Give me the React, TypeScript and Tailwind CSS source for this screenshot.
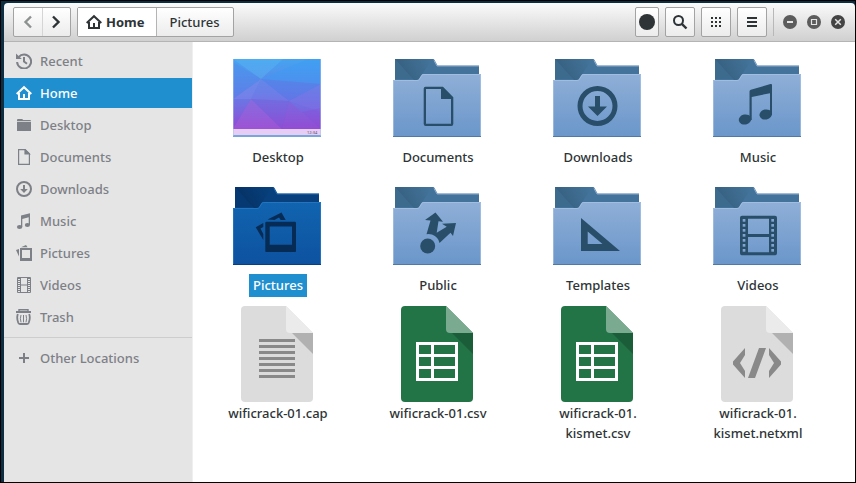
import React, { useState } from 'react';

type IconProps = { className?: string };

const HomeIcon: React.FC<IconProps> = ({ className }) => (
  <svg viewBox="0 0 16 16" className={className} fill="none" stroke="currentColor" strokeWidth="2">
    <path d="M0.7 9 8 2.2 15.3 9" />
    <path d="M3 8v6h10V8" />
    <path d="M8 14V9" />
  </svg>
);

const RecentIcon: React.FC<IconProps> = ({ className }) => (
  <svg viewBox="0 0 16 16" className={className} fill="none" stroke="currentColor" strokeWidth="2">
    <path d="M2.6 4.2A7 7 0 1 1 1.1 9" />
    <path d="M0 .5V6h5.8z" fill="currentColor" stroke="none" />
    <path d="M8 4v4.5l3 2.3" />
  </svg>
);

const FolderIcon: React.FC<IconProps> = ({ className }) => (
  <svg viewBox="0 0 16 16" className={className} fill="currentColor">
    <path d="M1 4.2V3q0-1 1-1h4.2l1 1H14q1 0 1 1v.2zM1 5h14v9H1z" />
  </svg>
);

const DocumentIcon: React.FC<IconProps> = ({ className }) => (
  <svg viewBox="0 0 16 16" className={className} fill="none" stroke="currentColor" strokeWidth="1.2">
    <path d="M2.6.6h6.6l4.2 4.2v10.6H2.6z" />
    <path d="M9 .6V5h4.4z" fill="currentColor" />
  </svg>
);

const DownloadIcon: React.FC<IconProps> = ({ className }) => (
  <svg viewBox="0 0 16 16" className={className} fill="none" stroke="currentColor" strokeWidth="2">
    <circle cx="8" cy="8" r="7" />
    <path d="M8 4v5" />
    <path d="M4.2 8h7.6L8 12z" fill="currentColor" stroke="none" />
  </svg>
);

const MusicIcon: React.FC<IconProps> = ({ className }) => (
  <svg viewBox="0 0 16 16" className={className} fill="currentColor">
    <path d="M5 2.6 14 .2V12h-1.3V4.2L6.3 6v8H5z" />
    <ellipse cx="3.6" cy="13.9" rx="2.7" ry="2" />
    <ellipse cx="11.4" cy="12" rx="2.6" ry="2" />
  </svg>
);

const PicturesIcon: React.FC<IconProps> = ({ className }) => (
  <svg viewBox="0 0 16 16" className={className} fill="currentColor">
    <path d="M4 3v13h12V3zm2 2h8v8H6z" fillRule="evenodd" />
    <path d="M5 2.2 10 0l1.6 2.2zM3 4v7.5L0 5z" />
  </svg>
);

const VideosIcon: React.FC<IconProps> = ({ className }) => (
  <svg viewBox="0 0 16 16" className={className} fill="none" stroke="currentColor">
    <path d="M1.5.5h13v15h-13zM4.5.5v15M11.5.5v15M4.5 8h7" />
    <path d="M3 1v14M13 1v14" strokeDasharray="1 1" strokeWidth="2" />
  </svg>
);

const TrashIcon: React.FC<IconProps> = ({ className }) => (
  <svg viewBox="0 0 16 16" className={className} fill="none" stroke="currentColor">
    <path d="M0 3h15" strokeWidth="2" />
    <path d="M3 2.5V.8h9v1.7" strokeWidth="1.4" />
    <path d="M1.8 5q-1.4 4.6.5 8.8.6 1.2 1.7 1.2h7q1.1 0 1.7-1.2 1.9-4.200.5-8.800" strokeWidth="1.8" />
    <path d="M5 6q-1.200 3.600 0 7.300M7.500 6v7.300M10 6q1.200 3.600 0 7.300" strokeWidth="1" />
  </svg>
);

const PlusIcon: React.FC<IconProps> = ({ className }) => (
  <svg viewBox="0 0 16 16" className={className} fill="none" stroke="currentColor" strokeWidth="2">
    <path d="M8 3v10M3 8h10" />
  </svg>
);

const ChevronIcon: React.FC<IconProps> = ({ className }) => (
  <svg viewBox="0 0 16 16" className={className} fill="none" stroke="currentColor" strokeWidth="2.4">
    <path d="m5 2.5 5.500 5.500L5 13.500" />
  </svg>
);

const Folder: React.FC<{ id: string; selected?: boolean; children: React.ReactNode }> = ({ id, selected, children }) => {
  const c = selected
    ? { top: '#1164b0', bottom: '#0d52a0', back: '#07407c', dark: '#052c5b', edge: '#2a7cc4', base: '#083f83', glyph: '#062c56' }
    : { top: '#8fafd7', bottom: '#6a96ca', back: '#43739a', dark: '#315875', edge: '#a9c3e3', base: '#5079a6', glyph: '#294e69' };
  return (
    <svg viewBox="0 0 96 96" className="size-24">
      <defs>
        <linearGradient id={`front-${id}`} x1="0" y1="0" x2="0" y2="1">
          <stop offset="0" stopColor={c.top} />
          <stop offset="1" stopColor={c.bottom} />
        </linearGradient>
        <linearGradient id={`back-${id}`} x1="0" y1="0.6" x2="1" y2="0.3">
          <stop offset="0" stopColor={c.dark} />
          <stop offset="1" stopColor={c.back} />
        </linearGradient>
      </defs>
      <path d="M5 9h38q1 0 1.500 1l3 5.500H89V32H5z" fill={c.back} />
      <path d="M5 9v20h19z" fill={c.dark} opacity=".3" />
      <path d="M5 9 24 30h5l4-7 9-14z" fill={`url(#back-${id})`} opacity=".8" />
      <path d="M44 10.500 47 16h42" fill="none" stroke={c.edge} opacity=".7" />
      <path d="M3 30h24q1.500 0 2-1l2.500-4q.5-1 1.500-1H91v63H3z" fill={`url(#front-${id})`} />
      <path d="M3.500 87V30.500H27q1.700 0 2.300-1l2.500-4q.5-1 1.500-1h57.200V87" fill="none" stroke={c.edge} opacity=".7" />
      <path d="M3 86.500h88" stroke={c.base} />
      <g fill={c.glyph}>{children}</g>
    </svg>
  );
};

const Sheet: React.FC<{ color: string; fold: string; shade: string; children: React.ReactNode }> = ({ color, fold, shade, children }) => (
  <svg viewBox="0 0 96 96" className="size-24">
    <path d="M15 0h41l27 27v65q0 4-4 4H15q-4 0-4-4V4q0-4 4-4z" fill={color} />
    <path d="M62 27h21v21z" fill={shade} />
    <path d="M56 0l27 27H60q-4 0-4-4z" fill={fold} />
    {children}
  </svg>
);

const DesktopThumb = () => (
  <svg viewBox="0 0 96 96" className="size-24">
    <defs>
      <linearGradient id="wallpaper" x1="0" y1="0" x2="0" y2="1">
        <stop offset="0" stopColor="#45a4f0" />
        <stop offset=".4" stopColor="#5f82e8" />
        <stop offset=".65" stopColor="#7868e0" />
        <stop offset=".9" stopColor="#9448d2" />
      </linearGradient>
    </defs>
    <path d="M3 9h88v78H3z" fill="url(#wallpaper)" />
    <path d="M3 9h50L31 29z" fill="#5cb8f3" opacity=".4" />
    <path d="M3 12 31 29 3 49z" fill="#4f86ea" opacity=".35" />
    <path d="M31 29 78 9h13v25z" fill="#3a9cf4" opacity=".4" />
    <path d="M31 29 91 34 59 51z" fill="#5578e6" opacity=".4" />
    <path d="M31 29 21 49 3 49z" fill="#7f88ea" opacity=".5" />
    <path d="M31 29 59 51 21 49z" fill="#7e7ee8" opacity=".35" />
    <path d="M59 51 91 34v28z" fill="#7f74e6" opacity=".4" />
    <path d="M21 49 3 79h49z" fill="#a860d8" opacity=".45" />
    <path d="M21 49l38 2-7 28z" fill="#8058d8" opacity=".35" />
    <path d="M59 51 91 79H52z" fill="#9254d8" opacity=".4" />
    <path d="M91 58v21L72 62z" fill="#8a4cd6" opacity=".35" />
    <path d="M3 79h88v6H3z" fill="#e6cdf3" />
    <path d="M3 85h88v2H3z" fill="#78a6dc" />
    <path d="M3.500 9v77M90.500 9v77" stroke="#a8c4f0" opacity=".5" />
    <text x="77" y="84" fontSize="4" fill="#5c4a66" fontFamily="Noto Sans, sans-serif">12:34</text>
  </svg>
);

const TableGlyph = () => (
  <path
    fill="#fff"
    fillRule="evenodd"
    d="M26 36h42v39H26zM29 39v9h12v-9zM44 39v9h21v-9zM29 51v9h12v-9zM44 51v9h21v-9zM29 63v9h12v-9zM44 63v9h21v-9z"
  />
);

const CsvSheet = () => (
  <Sheet color="#227447" fold="#7aab90" shade="#1b5d38">
    <TableGlyph />
  </Sheet>
);

const PLACES = [
  { name: 'Recent', Icon: RecentIcon },
  { name: 'Home', Icon: HomeIcon },
  { name: 'Desktop', Icon: FolderIcon },
  { name: 'Documents', Icon: DocumentIcon },
  { name: 'Downloads', Icon: DownloadIcon },
  { name: 'Music', Icon: MusicIcon },
  { name: 'Pictures', Icon: PicturesIcon },
  { name: 'Videos', Icon: VideosIcon },
  { name: 'Trash', Icon: TrashIcon },
];

const FILM_HOLES = [0, 1, 2, 3, 4, 5, 6];

const renderIcon = (name: string, selected: boolean) => {
  switch (name) {
    case 'Desktop':
      return <DesktopThumb />;
    case 'Documents':
      return (
        <Folder id="documents" selected={selected}>
          <path fillRule="evenodd" d="M35.500 36.700H53l10.300 10.500V74q0 2-2 2H35.700q-2 0-2-2V38.500q0-1.800 1.800-1.800zM36 39v34.700h25V49H51V39z" />
        </Folder>
      );
    case 'Downloads':
      return (
        <Folder id="downloads" selected={selected}>
          <path fillRule="evenodd" d="M47.500 36a20 20 0 1 1 0 40 20 20 0 0 1 0-40zm0 5a15 15 0 1 0 0 30 15 15 0 0 0 0-30z" />
          <path d="M45 46h5v10.500h7L47.500 66 38 56.500h7z" />
        </Folder>
      );
    case 'Music':
      return (
        <Folder id="music" selected={selected}>
          <path d="M39.500 41.500q0-1.300 1.300-1.700L60.500 34q1.500-.4 1.500 1v30h-2V43.200L41.700 47v23h-2.200z" />
          <ellipse cx="35" cy="69.500" rx="6.300" ry="5" transform="rotate(-12 35 69.500)" />
          <ellipse cx="55.700" cy="64.500" rx="6.300" ry="5" transform="rotate(-12 55.700 64.500)" />
        </Folder>
      );
    case 'Pictures':
      return (
        <Folder id="pictures" selected={selected}>
          <path fillRule="evenodd" d="M36.500 43.700h28.300q1.200 0 1.200 1.200v28q0 1.200-1.200 1.200H36.500q-1.200 0-1.200-1.200v-28q0-1.200 1.200-1.200zM39.700 48.500v18.200H62V48.500z" />
          <path d="m37.500 41.500 14-7 4.200 7.500h-5l-1.700-2.500-4.500 2.500zM33.300 45v4l-2.800 1.500 2.800 5.500v6L25.700 49.300z" />
        </Folder>
      );
    case 'Public':
      return (
        <Folder id="public" selected={selected}>
          <circle cx="37.700" cy="68" r="7.500" />
          <path d="M45.500 34.500 53 43.700l-4.500-.5-1.800 11.500 10-6-4.700-3L66 45l-3 13-2.500-3.300L49.500 65q-1-6-7.500-8.500-3-.8-5.500-.3l4-13.700L35 42z" />
        </Folder>
      );
    case 'Templates':
      return (
        <Folder id="templates" selected={selected}>
          <path fillRule="evenodd" d="M31 40v33h39zm6.700 13.500L52.500 66H37.700z" />
        </Folder>
      );
    case 'Videos':
      return (
        <Folder id="videos" selected={selected}>
          <path fillRule="evenodd" d="M32 37.700h33q2 0 2 2v35.500q0 2-2 2H32q-2 0-2-2V39.700q0-2 2-2zM38 40.700V56h21V40.700zM38 59v15.200h21V59z" />
          {FILM_HOLES.map(i => (
            <g key={i} fill="#7fa4d1">
              <rect x="32.700" y={41 + i * 5} width="2.700" height="2.700" />
              <rect x="61.300" y={41 + i * 5} width="2.700" height="2.700" />
            </g>
          ))}
        </Folder>
      );
    case 'wificrack-01.cap':
      return (
        <Sheet color="#dcdcdc" fold="#ebebeb" shade="#b1b1b1">
          <path fill="#898989" d="M29 33h36v3H29zM29 39h36v3H29zM29 45h36v3H29zM29 51h36v3H29zM29 57h36v3H29zM29 63h36v3H29zM29 69h36v3H29z" />
        </Sheet>
      );
    case 'wificrack-01.kismet.netxml':
      return (
        <Sheet color="#dcdcdc" fold="#ebebeb" shade="#b1b1b1">
          <path fill="#898989" d="M35 42v7l-5 8 5 8v7L23 58.500v-3zM59 42v7l5 8-5 8v7l12-13.500v-3zM49 42h7L45 72h-7z" />
        </Sheet>
      );
    default:
      return <CsvSheet />;
  }
};

const ITEMS = [
  { name: 'Desktop', lines: ['Desktop'] },
  { name: 'Documents', lines: ['Documents'] },
  { name: 'Downloads', lines: ['Downloads'] },
  { name: 'Music', lines: ['Music'] },
  { name: 'Pictures', lines: ['Pictures'] },
  { name: 'Public', lines: ['Public'] },
  { name: 'Templates', lines: ['Templates'] },
  { name: 'Videos', lines: ['Videos'] },
  { name: 'wificrack-01.cap', lines: ['wificrack-01.cap'] },
  { name: 'wificrack-01.csv', lines: ['wificrack-01.csv'] },
  { name: 'wificrack-01.kismet.csv', lines: ['wificrack-01.', 'kismet.csv'] },
  { name: 'wificrack-01.kismet.netxml', lines: ['wificrack-01.', 'kismet.netxml'] },
];

const TOOL_BUTTON = 'flex h-[30px] items-center justify-center rounded-xs border border-[#a3a3a3] bg-linear-to-b from-white to-[#ececec]';

const HeaderBar = () => (
  <header className="flex items-start rounded-t-sm border-b border-[#b4b4b4] bg-linear-to-b from-[#fbfbfb] to-[#d0d0d0] pt-1 pr-2.5 pb-1 pl-[9px]">
    <div className="flex h-[30px] w-[58px] rounded-xs border border-[#a3a3a3] bg-linear-to-b from-white to-[#ececec]">
      <button type="button" aria-label="Back" className="flex flex-1 items-center justify-center border-r border-[#d5d5d5] text-[#8e9192]">
        <ChevronIcon className="size-4 rotate-180" />
      </button>
      <button type="button" aria-label="Forward" className="flex flex-1 items-center justify-center">
        <ChevronIcon className="size-4" />
      </button>
    </div>

    <nav className="ml-1.5 flex h-[30px] rounded-xs border border-[#a3a3a3] bg-linear-to-b from-white to-[#ececec]">
      <button type="button" className="flex items-center gap-1 border-r border-[#b4b4b4] bg-white pr-[11px] pl-2 font-bold">
        <HomeIcon className="size-4" />
        <span className="pt-0.5">Home</span>
      </button>
      <button type="button" className="px-[13px] pt-0.5 font-medium">Pictures</button>
    </nav>

    <div className="ml-auto flex items-center gap-1.5">
      <button type="button" aria-label="Record" className={`w-6 ${TOOL_BUTTON}`}>
        <span className="size-4 shrink-0 rounded-full bg-[#2e3436]" />
      </button>
      <button type="button" aria-label="Search" className={`w-[30px] ${TOOL_BUTTON}`}>
        <svg viewBox="0 0 16 16" className="size-4" fill="none" stroke="currentColor">
          <circle cx="6.500" cy="6.500" r="4.500" strokeWidth="2" />
          <path d="m9.800 9.800 4.700 4.700" strokeWidth="2.400" />
        </svg>
      </button>
      <button type="button" aria-label="Icon view" className={`w-[30px] ${TOOL_BUTTON}`}>
        <svg viewBox="0 0 16 16" className="size-4" fill="none" stroke="currentColor" strokeWidth="2" strokeDasharray="2 2">
          <path d="M3 4h10M3 8h10M3 12h10" />
        </svg>
      </button>
      <button type="button" aria-label="Menu" className={`w-[30px] ${TOOL_BUTTON}`}>
        <svg viewBox="0 0 16 16" className="size-4" fill="none" stroke="currentColor" strokeWidth="2">
          <path d="M3 4h10M3 8h10M3 12h10" />
        </svg>
      </button>
      <div className="h-7 w-px bg-[#b8b8b8]" />
      <div className="ml-[3px] flex gap-2.5">
        <button type="button" aria-label="Minimize">
          <svg viewBox="0 0 14 14" className="size-3.5" fill="none">
            <circle cx="7" cy="7" r="7" fill="#5c5c5c" />
            <path d="M4 7h6" stroke="#e4e4e4" strokeWidth="2" />
          </svg>
        </button>
        <button type="button" aria-label="Maximize">
          <svg viewBox="0 0 14 14" className="size-3.5" fill="none">
            <circle cx="7" cy="7" r="7" fill="#5c5c5c" />
            <path d="M4.500 4.500h5v5h-5z" stroke="#e4e4e4" strokeWidth="1.200" />
          </svg>
        </button>
        <button type="button" aria-label="Close">
          <svg viewBox="0 0 14 14" className="size-3.5" fill="none">
            <circle cx="7" cy="7" r="7" fill="#444" />
            <path d="m4.200 4.200 5.600 5.600M9.800 4.200 4.200 9.800" stroke="#e4e4e4" strokeWidth="1.500" />
          </svg>
        </button>
      </div>
    </div>
  </header>
);

const App: React.FC = () => {
  const [place, setPlace] = useState('Home');
  const [selected, setSelected] = useState('Pictures');

  return (
    <div className="flex min-h-screen flex-col border border-black bg-[#0d2d42] pt-0.5 pl-[3px] font-['Noto_Sans',sans-serif] text-[13px] text-[#2e3436]">
      <HeaderBar />

      <div className="flex flex-1">
        {/* Places */}
        <aside className="w-[189px] shrink-0 border-r border-[#efefef] bg-[#e5e5e5] pt-1 font-medium text-[#7d8087]">
          <div className="flex flex-col gap-0.5">
            {PLACES.map(({ name, Icon }) => (
              <button
                key={name}
                type="button"
                onClick={() => setPlace(name)}
                className={`flex h-[30px] items-center gap-2 pl-3 ${place === name ? 'bg-[#1f8fd0] text-white' : ''}`}
              >
                <Icon className="size-4" />
                <span className="pt-0.5">{name}</span>
              </button>
            ))}
          </div>
          <hr className="my-[5px] border-[#cdcdcd]" />
          <button type="button" className="flex h-[30px] w-full items-center gap-2 pl-3">
            <PlusIcon className="size-4" />
            <span className="pt-0.5">Other Locations</span>
          </button>
        </aside>

        {/* Files */}
        <main className="grid flex-1 grid-cols-[repeat(auto-fill,160px)] content-start gap-y-[9px] bg-white pt-2 pl-[5px]">
          {ITEMS.map(({ name, lines }) => (
            <button key={name} type="button" onClick={() => setSelected(name)} className="flex flex-col items-center justify-start">
              {renderIcon(name, selected === name)}
              <span className={`px-1 pt-px pb-0.5 leading-5 font-medium ${selected === name ? 'bg-[#1f8fd0] text-white' : ''}`}>
                {lines.map(line => (
                  <span key={line} className="block">{line}</span>
                ))}
              </span>
            </button>
          ))}
        </main>
      </div>
    </div>
  );
};

export default App;
